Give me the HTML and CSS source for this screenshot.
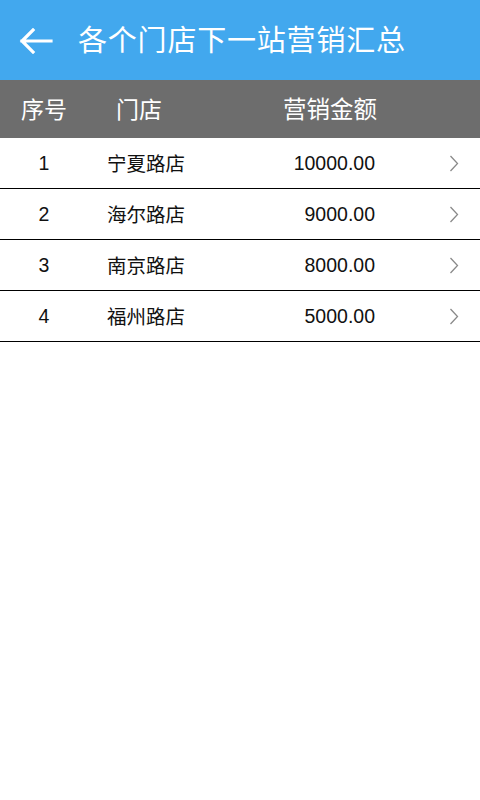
FILE: index.html
```html
<!DOCTYPE html>
<html lang="zh">
<head>
<meta charset="utf-8">
<link rel="stylesheet" href="styles.css">
</head>
<body>
<header class="topbar">
  <svg class="back" width="34" height="26" viewBox="0 0 34 26"><path d="M32 13H3M14 2L3 13l11 11" fill="none" stroke="#fff" stroke-width="3.2" stroke-linecap="square"/></svg>
  <h1 class="title">各个门店下一站营销汇总</h1>
</header>
<div class="thead">
  <span class="c-no">序号</span>
  <span class="c-name">门店</span>
  <span class="c-amt">营销金额</span>
</div>
<ul class="list">
  <li class="row"><span class="c-no">1</span><span class="c-name">宁夏路店</span><span class="c-amt">10000.00</span><svg class="chev" width="10" height="17" viewBox="0 0 10 17"><path d="M1.5 1l7 7.5-7 7.5" fill="none" stroke="#8a8a8a" stroke-width="1.3"/></svg></li>
  <li class="row"><span class="c-no">2</span><span class="c-name">海尔路店</span><span class="c-amt">9000.00</span><svg class="chev" width="10" height="17" viewBox="0 0 10 17"><path d="M1.5 1l7 7.5-7 7.5" fill="none" stroke="#8a8a8a" stroke-width="1.3"/></svg></li>
  <li class="row"><span class="c-no">3</span><span class="c-name">南京路店</span><span class="c-amt">8000.00</span><svg class="chev" width="10" height="17" viewBox="0 0 10 17"><path d="M1.5 1l7 7.5-7 7.5" fill="none" stroke="#8a8a8a" stroke-width="1.3"/></svg></li>
  <li class="row"><span class="c-no">4</span><span class="c-name">福州路店</span><span class="c-amt">5000.00</span><svg class="chev" width="10" height="17" viewBox="0 0 10 17"><path d="M1.5 1l7 7.5-7 7.5" fill="none" stroke="#8a8a8a" stroke-width="1.3"/></svg></li>
</ul>
</body>
</html>
```
FILE: styles.css
```css
* { box-sizing: border-box; }
html, body { margin: 0; padding: 0; background: #fff; }
body { font-family: "Liberation Sans", "Noto Sans CJK SC", sans-serif; width: 480px; }
.topbar {
  height: 80px;
  background: #42a8ee;
  display: flex;
  align-items: center;
  padding-left: 19px;
}
.back { display: block; margin-top: 1px; }
.title {
  margin: 0 0 3px 25px;
  font-family: "Noto Sans CJK SC", sans-serif;
  font-weight: 400;
  font-size: 29px;
  color: #fff;
  letter-spacing: 0.8px;
  line-height: 1;
}
.thead {
  height: 58px;
  padding-bottom: 3px;
  background: #6d6d6d;
  color: #fff;
  display: grid;
  grid-template-columns: 88px 170px 119px;
  align-items: center;
  font-family: "Noto Sans CJK SC", sans-serif;
  font-size: 23px;
}
.thead .c-no { text-align: center; }
.thead .c-name { padding-left: 28px; }
.thead .c-amt { text-align: right; font-size: 23.5px; }
.list { list-style: none; margin: 0; padding: 0; }
.row {
  height: 51px;
  border-bottom: 1px solid #000;
  display: grid;
  grid-template-columns: 88px 140px 147px 1fr;
  align-items: center;
  font-size: 19.5px;
  color: #111;
}
.row .c-no { text-align: center; }
.row .c-name { padding-left: 19px; font-family: "Noto Sans CJK SC", sans-serif; font-size: 19.5px; padding-bottom: 2px; }
.row .c-amt { text-align: right; }
.chev { justify-self: end; margin-right: 21px; margin-top: 1px; }
```
